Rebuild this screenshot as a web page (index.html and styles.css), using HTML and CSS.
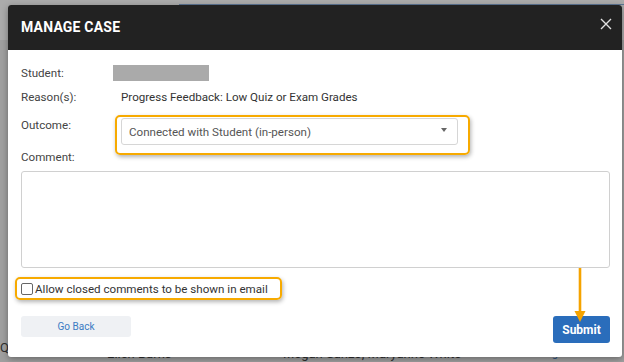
FILE: index.html
```html
<!DOCTYPE html>
<html lang="en">
<head>
    <meta charset="UTF-8">
    <meta name="viewport" content="width=device-width, initial-scale=1.0">
    <title>Manage Case</title>
    <link rel="stylesheet" href="styles.css">
</head>
<body>
    <div class="page">
        <div class="page-top">
            <div class="tab-line"></div>
        </div>
        <div class="page-row">
            <span class="cell-reason">Quiz</span>
            <span class="cell-student">Ellen Burns</span>
            <span class="cell-staff">Megan Sanzo, Maryanne White</span>
            <a class="cell-link" href="#">Manage Case</a>
        </div>
    </div>

    <div class="modal">
        <div class="modal-header">
            <span class="modal-title">MANAGE CASE</span>
            <svg class="close" width="12" height="12" viewBox="0 0 12 12">
                <path d="M1 1 L11 11 M11 1 L1 11" stroke="#e0e0e0" stroke-width="1.4" fill="none"/>
            </svg>
        </div>
        <div class="modal-body">
            <div class="row row-student">
                <span class="label">Student:</span>
                <span class="redacted"></span>
            </div>
            <div class="row row-reason">
                <span class="label">Reason(s):</span>
                <span class="value">Progress Feedback: Low Quiz or Exam Grades</span>
            </div>
            <div class="row row-outcome">
                <span class="label">Outcome:</span>
                <div class="highlight highlight-select">
                    <div class="select">
                        <span>Connected with Student (in-person)</span>
                        <span class="caret"></span>
                    </div>
                </div>
            </div>
            <div class="label comment-label">Comment:</div>
            <div class="textarea"></div>
            <div class="highlight highlight-check">
                <input type="checkbox" class="check">
                <span class="check-label">Allow closed comments to be shown in email</span>
            </div>
            <div class="actions">
                <button class="btn-back">Go Back</button>
                <button class="btn-submit">Submit</button>
            </div>
        </div>
        <svg class="arrow" width="14" height="56" viewBox="0 0 14 56">
            <path d="M7 0 L7 46" stroke="#f5a300" stroke-width="2.6" fill="none"/>
            <path d="M1.5 43 L12.5 43 L7 54 Z" fill="#f5a300"/>
        </svg>
    </div>
</body>
</html>
```

FILE: styles.css
```css
body {
    margin: 0;
    font-family: Roboto, "Liberation Sans", sans-serif;
    background-color: #9f9f9f;
    width: 624px;
    height: 362px;
    overflow: hidden;
    position: relative;
}
.page-top {
    height: 40px;
    background-color: #ababab;
    padding-top: 4px;
    box-sizing: border-box;
}
.tab-line {
    margin-left: 179px;
    height: 1px;
    background-color: #5d7593;
}
.page-row {
    margin-top: 306px;
    height: 16px;
    display: flex;
    font-size: 13px;
    line-height: 16px;
    color: #2e2e2e;
    white-space: nowrap;
}
.cell-reason {
    margin-top: -6px;
    width: 107px;
}
.cell-student {
    width: 176px;
}
.cell-staff {
    width: 241px;
}
.cell-link {
    color: #2b4f7e;
    font-size: 11px;
    text-decoration: none;
}

.modal {
    position: absolute;
    top: 5px;
    left: 8px;
    width: 614px;
    height: 352px;
    background-color: #fff;
    border-radius: 3px;
    box-shadow: 0 2px 6px rgba(0, 0, 0, 0.35);
    overflow: hidden;
}
.modal-header {
    height: 45px;
    background-color: #222;
    display: flex;
    justify-content: space-between;
    padding: 0 10px 0 13px;
}
.modal-title {
    color: #fff;
    font-size: 14px;
    font-weight: bold;
    letter-spacing: 0.2px;
    margin-top: 14px;
}
.close {
    margin-top: 13px;
}
.modal-body {
    padding: 13px 12px 0 13px;
    font-size: 11.6px;
    color: #444;
}
.row {
    display: flex;
    align-items: center;
}
.label {
    width: 92px;
    flex-shrink: 0;
    line-height: 14px;
}
.row-student {
    height: 20px;
}
.redacted {
    width: 96px;
    height: 16px;
    background-color: #aaa;
}
.row-reason {
    height: 28px;
}
.value {
    margin-left: 8px;
    color: #333;
}
.row-outcome {
    height: 39px;
    align-items: flex-start;
}
.row-outcome .label {
    padding-top: 7px;
}
.highlight {
    border: 2px solid #f7aa00;
    border-radius: 5px;
    box-shadow: 1px 2px 4px rgba(0, 0, 0, 0.3);
    box-sizing: border-box;
}
.highlight-select {
    margin: 4px 0 0 2px;
    width: 355px;
    height: 40px;
    padding: 1px 0 0 4px;
    flex-shrink: 0;
}
.select {
    width: 337px;
    height: 27px;
    border: 1px solid #d6d6d6;
    border-radius: 3px;
    box-sizing: border-box;
    display: flex;
    align-items: center;
    justify-content: space-between;
    padding: 0 10px 0 7px;
    color: #555;
}
.caret {
    width: 0;
    height: 0;
    border-left: 3.5px solid transparent;
    border-right: 3.5px solid transparent;
    border-top: 4px solid #666;
    margin-top: -3px;
}
.comment-label {
    margin-top: 0;
}
.textarea {
    margin-top: 7px;
    height: 97px;
    border: 1px solid #d0d0d0;
    border-radius: 3px;
    box-sizing: border-box;
}
.highlight-check {
    margin: 9px 0 0 -6px;
    width: 267px;
    height: 23px;
    display: flex;
    align-items: center;
    padding-left: 4px;
    white-space: nowrap;
}
.check {
    appearance: none;
    flex-shrink: 0;
    margin: 0;
    width: 12px;
    height: 12px;
    border: 1px solid #666;
    border-radius: 2px;
    background-color: #fff;
    box-sizing: border-box;
}
.check-label {
    margin-left: 2px;
    font-size: 11.6px;
    color: #333;
}
.actions {
    margin-top: 16px;
    display: flex;
    justify-content: space-between;
    align-items: flex-start;
}
.btn-back {
    width: 110px;
    height: 21px;
    border: none;
    border-radius: 3px;
    background-color: #eff1f4;
    color: #3b7bc3;
    font-family: Roboto, "Liberation Sans", sans-serif;
    font-size: 10px;
    padding: 0;
}
.btn-submit {
    width: 57px;
    height: 27px;
    border: none;
    border-radius: 3px;
    background-color: #2a6dbb;
    color: #fff;
    font-family: Roboto, "Liberation Sans", sans-serif;
    font-size: 12px;
    font-weight: bold;
    padding: 0;
}
.arrow {
    position: absolute;
    left: 565px;
    top: 263px;
}
```
